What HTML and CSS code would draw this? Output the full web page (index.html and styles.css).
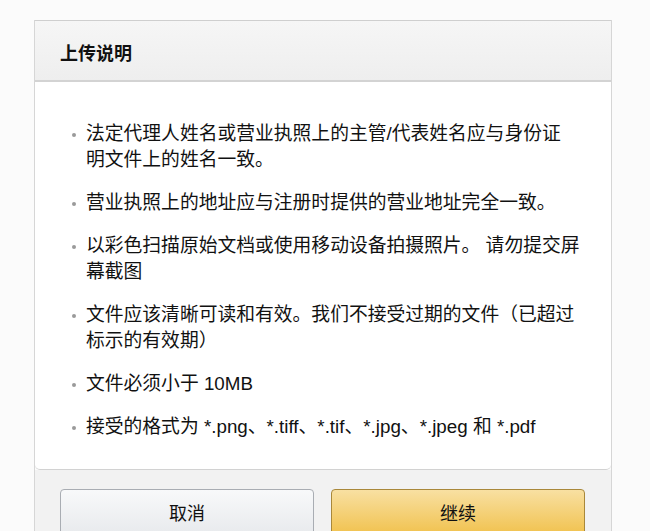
FILE: index.html
```html
<!DOCTYPE html>
<html lang="zh-CN">
<head>
<meta charset="utf-8">
<title>上传说明</title>
<link rel="stylesheet" href="styles.css">
</head>
<body>
<div class="page">
  <div class="modal">
    <div class="modal-header">
      <h2 class="modal-title">上传说明</h2>
    </div>
    <div class="modal-body">
      <ul class="rules">
        <li>法定代理人姓名或营业执照上的主管/代表姓名应与身份证<br>明文件上的姓名一致。</li>
        <li>营业执照上的地址应与注册时提供的营业地址完全一致。</li>
        <li>以彩色扫描原始文档或使用移动设备拍摄照片。 请勿提交屏幕截图</li>
        <li>文件应该清晰可读和有效。我们不接受过期的文件（已超过标示的有效期）</li>
        <li>文件必须小于 10MB</li>
        <li>接受的格式为 *.png、*.tiff、*.tif、*.jpg、*.jpeg 和 *.pdf</li>
      </ul>
    </div>
    <div class="modal-footer">
      <button class="btn btn-cancel">取消</button>
      <button class="btn btn-primary">继续</button>
    </div>
  </div>
</div>
</body>
</html>
```
FILE: styles.css
```css
html, body {
  margin: 0;
  padding: 0;
  background: #fbfbfb;
}
body {
  font-family: "Liberation Sans", "Noto Sans CJK SC", sans-serif;
  color: #111;
  height: 531px;
  overflow: hidden;
}
.page {
  padding: 20px 0 0 34px;
}
.modal {
  width: 578px;
  box-sizing: border-box;
  border-left: 1px solid #d6d6d6;
  border-right: 1px solid #d6d6d6;
}
.modal-header {
  height: 62px;
  box-sizing: border-box;
  border-top: 1px solid #cfcfcf;
  border-bottom: 2px solid #d3d3d3;
  background: linear-gradient(#f6f6f6, #eeeeee);
  display: flex;
  align-items: center;
  padding: 0 0 0 25px;
}
.modal-title {
  margin: 0;
  font-size: 18px;
  font-weight: 700;
  color: #111;
  font-family: "Noto Sans CJK SC", sans-serif;
  line-height: 1;
  padding-top: 2px;
}
.modal-body {
  background: #fff;
  border-bottom: 1px solid #d2d2d2;
  border-radius: 0 0 5px 5px;
  padding: 39px 0 29px 0;
}
.rules {
  list-style: none;
  margin: 0;
  padding: 0 0 0 51px;
  width: 497px;
  display: flex;
  flex-direction: column;
  gap: 17px;
}
.rules li {
  position: relative;
  font-size: 18.8px;
  line-height: 26px;
}
.rules li::before {
  content: "";
  position: absolute;
  left: -14px;
  top: 12px;
  width: 4px;
  height: 4px;
  border-radius: 50%;
  background: #9a9a9a;
}
.modal-footer {
  background: #f2f2f2;
  padding: 19px 0 0 25px;
  display: flex;
  gap: 17px;
}
.btn {
  width: 254px;
  height: 46px;
  font-family: "Noto Sans CJK SC", sans-serif;
  font-size: 18px;
  color: #111;
  border-radius: 4px;
  cursor: pointer;
}
.btn-cancel {
  background: linear-gradient(#f8f9fa, #e8eaed);
  border: 1px solid #a9adb3;
}
.btn-primary {
  background: linear-gradient(#f8e0a2, #f1c24f);
  border: 1px solid #a9883a;
}
```
